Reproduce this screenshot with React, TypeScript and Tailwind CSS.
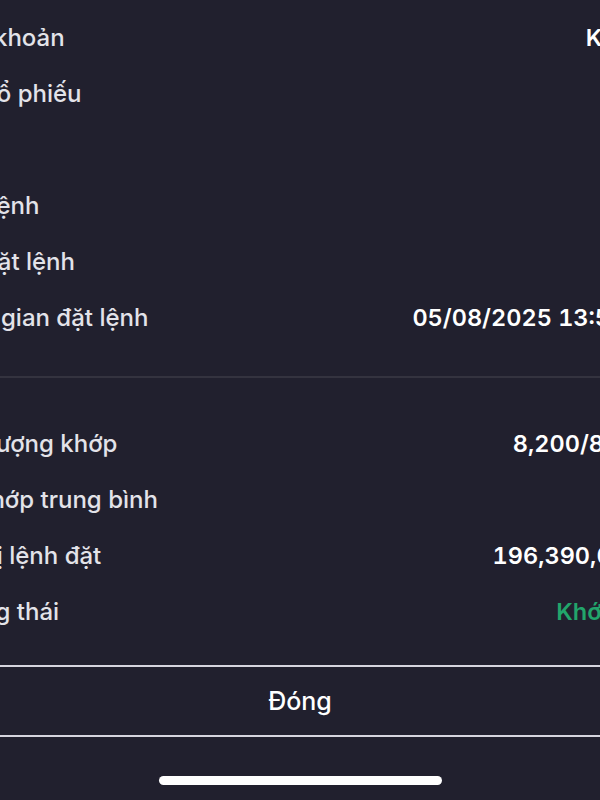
type RowData = { label: string; value: string; tone: string; cut: string; edge: string };

// cut / edge = how far the zoomed-in texts run off the left and right edges
const topRows: RowData[] = [
  { label: "Tài khoản", value: "K168", tone: "text-white", cut: "-ml-[46px]", edge: "mr-0" },
  { label: "Mã cổ phiếu", value: "VIB", tone: "text-white", cut: "-ml-[59px]", edge: "mr-0" },
  { label: "Lệnh", value: "Bán", tone: "text-[#e5484d]", cut: "-ml-[60px]", edge: "mr-0" },
  { label: "Loại lệnh", value: "LO", tone: "text-white", cut: "-ml-[64px]", edge: "mr-0" },
  { label: "Kênh đặt lệnh", value: "iOS", tone: "text-white", cut: "-ml-[82px]", edge: "mr-0" },
  { label: "Thời gian đặt lệnh", value: "05/08/2025 13:55:21", tone: "text-white", cut: "-ml-[56px]", edge: "-mr-[14px]" },
];

const bottomRows: RowData[] = [
  { label: "Khối lượng khớp", value: "8,200/8,200", tone: "text-white", cut: "-ml-[68px]", edge: "-mr-[8px]" },
  { label: "Giá khớp trung bình", value: "—", tone: "text-white", cut: "-ml-[67px]", edge: "mr-0" },
  { label: "Giá trị lệnh đặt", value: "196,390,000", tone: "text-white", cut: "-ml-[65px]", edge: "mr-[6px]" },
  { label: "Trạng thái", value: "Khớp hết", tone: "text-[#22a56b]", cut: "-ml-[56px]", edge: "-mr-[11px]" },
];

function Row({ label, value, tone, cut, edge }: RowData) {
  return (
    <div className="flex h-[56px] items-center justify-between whitespace-nowrap">
      <span className={`${cut} text-[24px] font-medium text-[#e3e3e9]`}>{label}</span>
      <span className={`${edge} text-[23.5px] font-semibold tabular-nums ${tone}`}>{value}</span>
    </div>
  );
}

export default function App() {
  return (
    <div className="h-[800px] w-[600px] overflow-hidden bg-[#21202e] font-['Inter','Noto_Sans',sans-serif] text-[24px] leading-none">
      {/* order details, zoomed so both edges are cut off */}
      <div className="-mr-[48px] pt-[10px]">
        {topRows.map((r) => (
          <Row key={r.label} {...r} />
        ))}
        <div className="mt-[30px] h-[2px] bg-[#34333f]" />
        <div className="mt-[38px]">
          {bottomRows.map((r) => (
            <Row key={r.label} {...r} />
          ))}
        </div>
      </div>

      <button className="mt-[25px] flex h-[72px] w-full items-center justify-center border-y-2 border-[#d6d5de] text-[25px] font-medium text-white">
        Đóng
      </button>

      {/* home indicator */}
      <div className="mx-auto mt-[39px] h-[9px] w-[283px] rounded-full bg-white" />
    </div>
  );
}
